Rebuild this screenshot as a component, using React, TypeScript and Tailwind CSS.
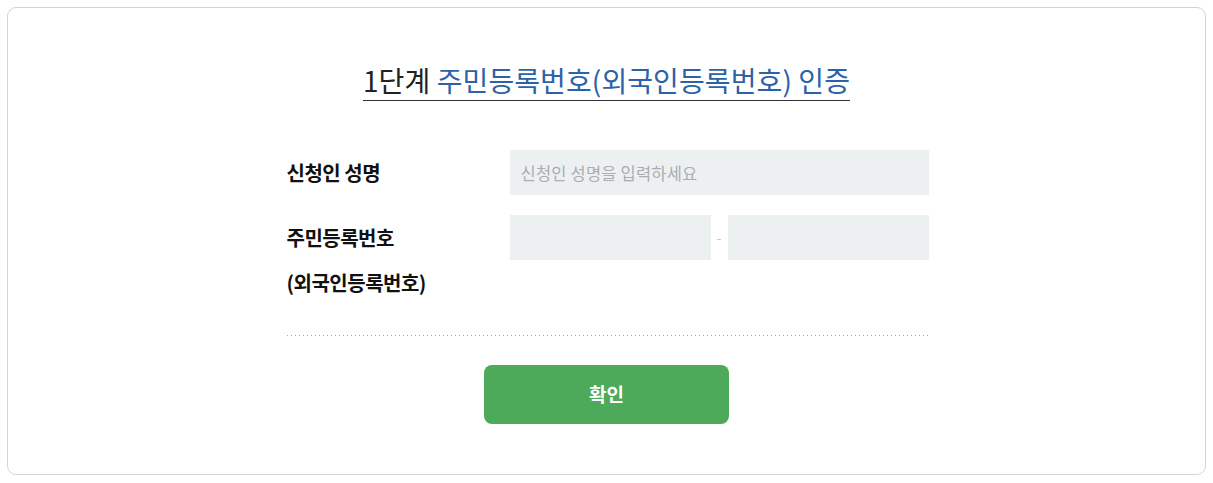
import React from "react";

const App: React.FC = () => {
  return (
    <div className="min-h-[483px] w-[1213px] bg-white p-[7px] font-['Noto_Sans_CJK_KR','Noto_Sans',sans-serif]">
      <div className="flex h-[468px] flex-col items-center rounded-[9px] border border-[#d4d4d4] pt-[55px]">
        <h2 className="border-b border-[#333] pb-[2px] text-[28px] leading-[35px] tracking-[0.1px] text-[#222]">
          1단계 <span className="text-[#2b62a8]">주민등록번호(외국인등록번호) 인증</span>
        </h2>

        <div className="ml-[2px] mt-[49px] w-[642px]">
          <div className="flex items-center">
            <label className="w-[223px] text-[20px] font-bold tracking-[-0.5px] text-[#111]">
              신청인 성명
            </label>
            <input
              type="text"
              placeholder="신청인 성명을 입력하세요"
              className="h-[45px] w-[419px] bg-[#edf0f1] px-[11px] text-[16.5px] tracking-[0.2px] text-[#333] outline-none placeholder:text-[#a9adb1]"
            />
          </div>

          <div className="mt-[20px] flex items-start">
            <div className="w-[223px] text-[20px] font-bold tracking-[-0.5px] text-[#111]">
              <div className="h-[45px] leading-[45px]">주민등록번호</div>
              <div className="leading-[46px]">(외국인등록번호)</div>
            </div>
            <div className="flex items-center">
              <input
                type="text"
                className="h-[45px] w-[201px] bg-[#edf0f1] outline-none"
              />
              <span className="w-[17px] text-center text-[14px] text-[#c4c7ca]">-</span>
              <input
                type="password"
                className="h-[45px] w-[201px] bg-[#edf0f1] outline-none"
              />
            </div>
          </div>

          <div className="mt-[29px] h-[1px] bg-[linear-gradient(to_right,#a8a8a8_1px,transparent_1px)] bg-[length:4px_1px]" />

          <div className="mt-[29px] flex justify-center pr-[2px]">
            <button className="h-[59px] w-[245px] rounded-[8px] bg-[#4caa5a] text-[19px] font-bold text-white">
              확인
            </button>
          </div>
        </div>
      </div>
    </div>
  );
};

export default App;
